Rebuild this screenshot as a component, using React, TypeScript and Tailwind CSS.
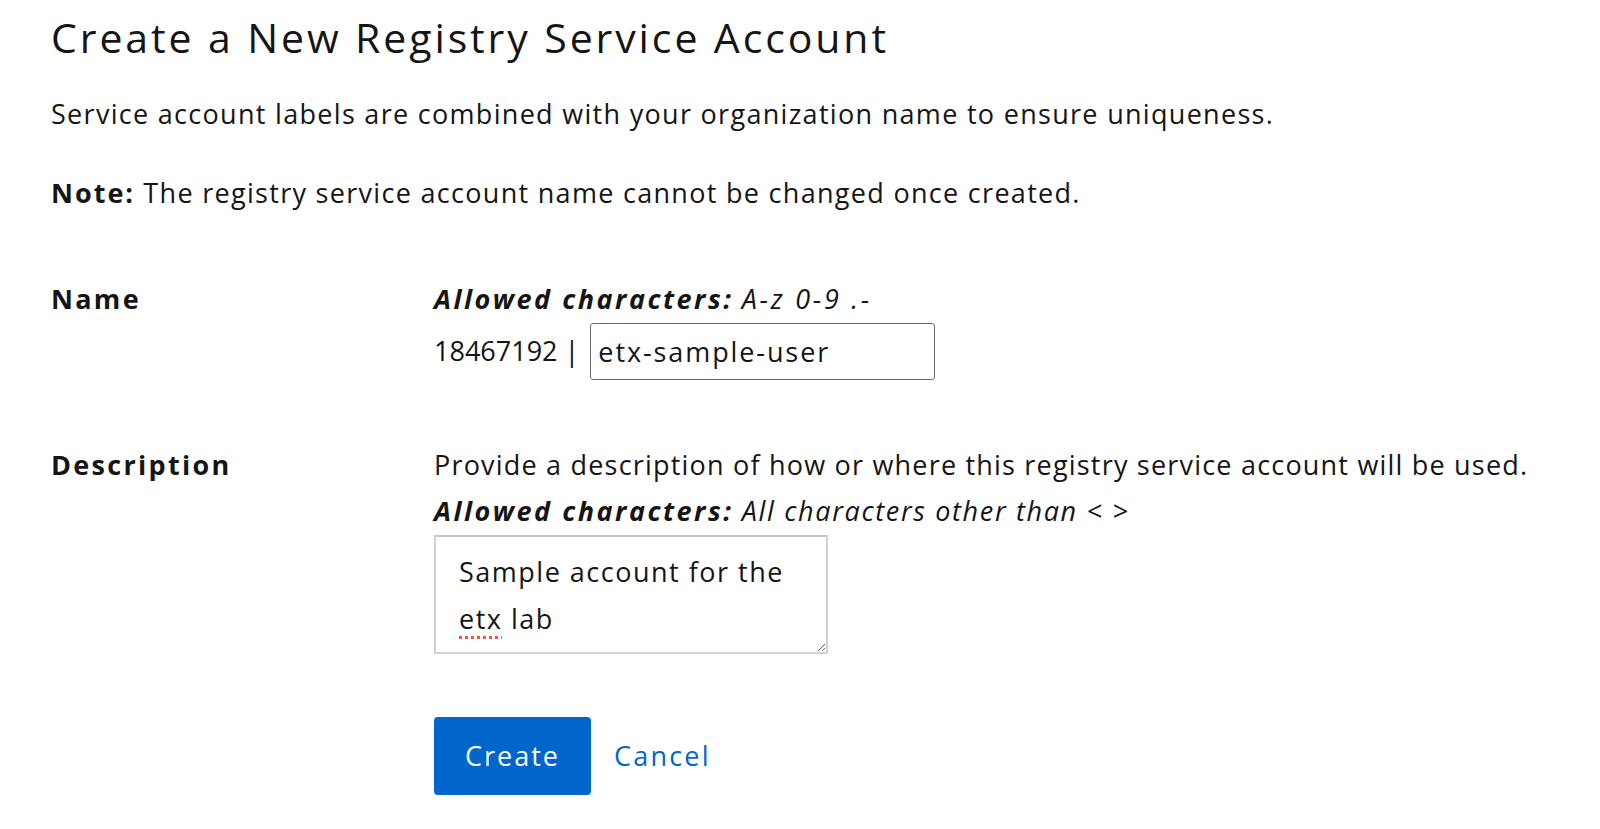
import { useState } from 'react';

const font = { fontFamily: '"Open Sans", "Noto Sans", sans-serif' };

export default function App() {
  const [name, setName] = useState('etx-sample-user');

  return (
    <div className="min-h-screen bg-white text-[#151515] pl-[51px] pt-[13px] tracking-[1.3px]" style={font}>
      <h1 className="text-[41px] leading-[48px] font-normal tracking-[2.9px]">
        Create a New Registry Service Account
      </h1>
      <p className="mt-[33px] text-[27px] leading-[40px]">
        Service account labels are combined with your organization name to ensure uniqueness.
      </p>
      <p className="mt-[39px] text-[27px] leading-[40px]">
        <b className="font-bold tracking-[2px]">Note:</b> The registry service account name cannot be changed
        once created.
      </p>

      <div className="mt-[66px] flex text-[27px]">
        <div className="w-[383px] shrink-0 font-bold leading-[40px] tracking-[2.3px]">Name</div>
        <div className="flex flex-col">
          <div className="leading-[40px] italic">
            <b className="font-bold tracking-[2.5px]">Allowed characters:</b>{' '}
            <span className="tracking-[2.7px]">A-z 0-9 .-</span>
          </div>
          <div className="mt-[4px] flex items-center gap-[11px]">
            <span className="tracking-normal">18467192 |</span>
            <input
              value={name}
              onChange={(e) => setName(e.target.value)}
              className="w-[345px] h-[57px] border border-[#6a6e73] rounded-[3px] px-[7px] text-[27px] tracking-[1.9px] outline-none"
            />
          </div>
        </div>
      </div>

      <div className="mt-[62px] flex text-[27px]">
        <div className="w-[383px] shrink-0 font-bold leading-[46px] tracking-[2.3px]">Description</div>
        <div className="flex flex-col">
          <div className="leading-[46px] tracking-[1.2px]">
            Provide a description of how or where this registry service account will be used.
          </div>
          <div className="leading-[46px] italic">
            <b className="font-bold tracking-[2.5px]">Allowed characters:</b>{' '}
            <span className="tracking-[1.65px]">All characters other than &lt; &gt;</span>
          </div>
          <div
            role="textbox"
            className="mt-[1px] w-[394px] h-[119px] border-2 border-[#d2d2d2] border-t-[#c7c7c7] pl-[23px] pr-[20px] pt-[11px] leading-[47px] tracking-[1.5px] resize overflow-auto"
          >
            Sample account for the{' '}
            <span className="underline decoration-dotted decoration-[#f0564f] decoration-[3px] underline-offset-[7px]">
              etx
            </span>{' '}
            lab
          </div>
        </div>
      </div>

      <div className="mt-[63px] ml-[383px] flex items-center gap-[23px] text-[27px] tracking-[2px]">
        <button className="w-[157px] h-[78px] rounded-[4px] bg-[#0066cc] text-white">Create</button>
        <button className="text-[#0066cc] tracking-[2.2px]">Cancel</button>
      </div>
    </div>
  );
}
